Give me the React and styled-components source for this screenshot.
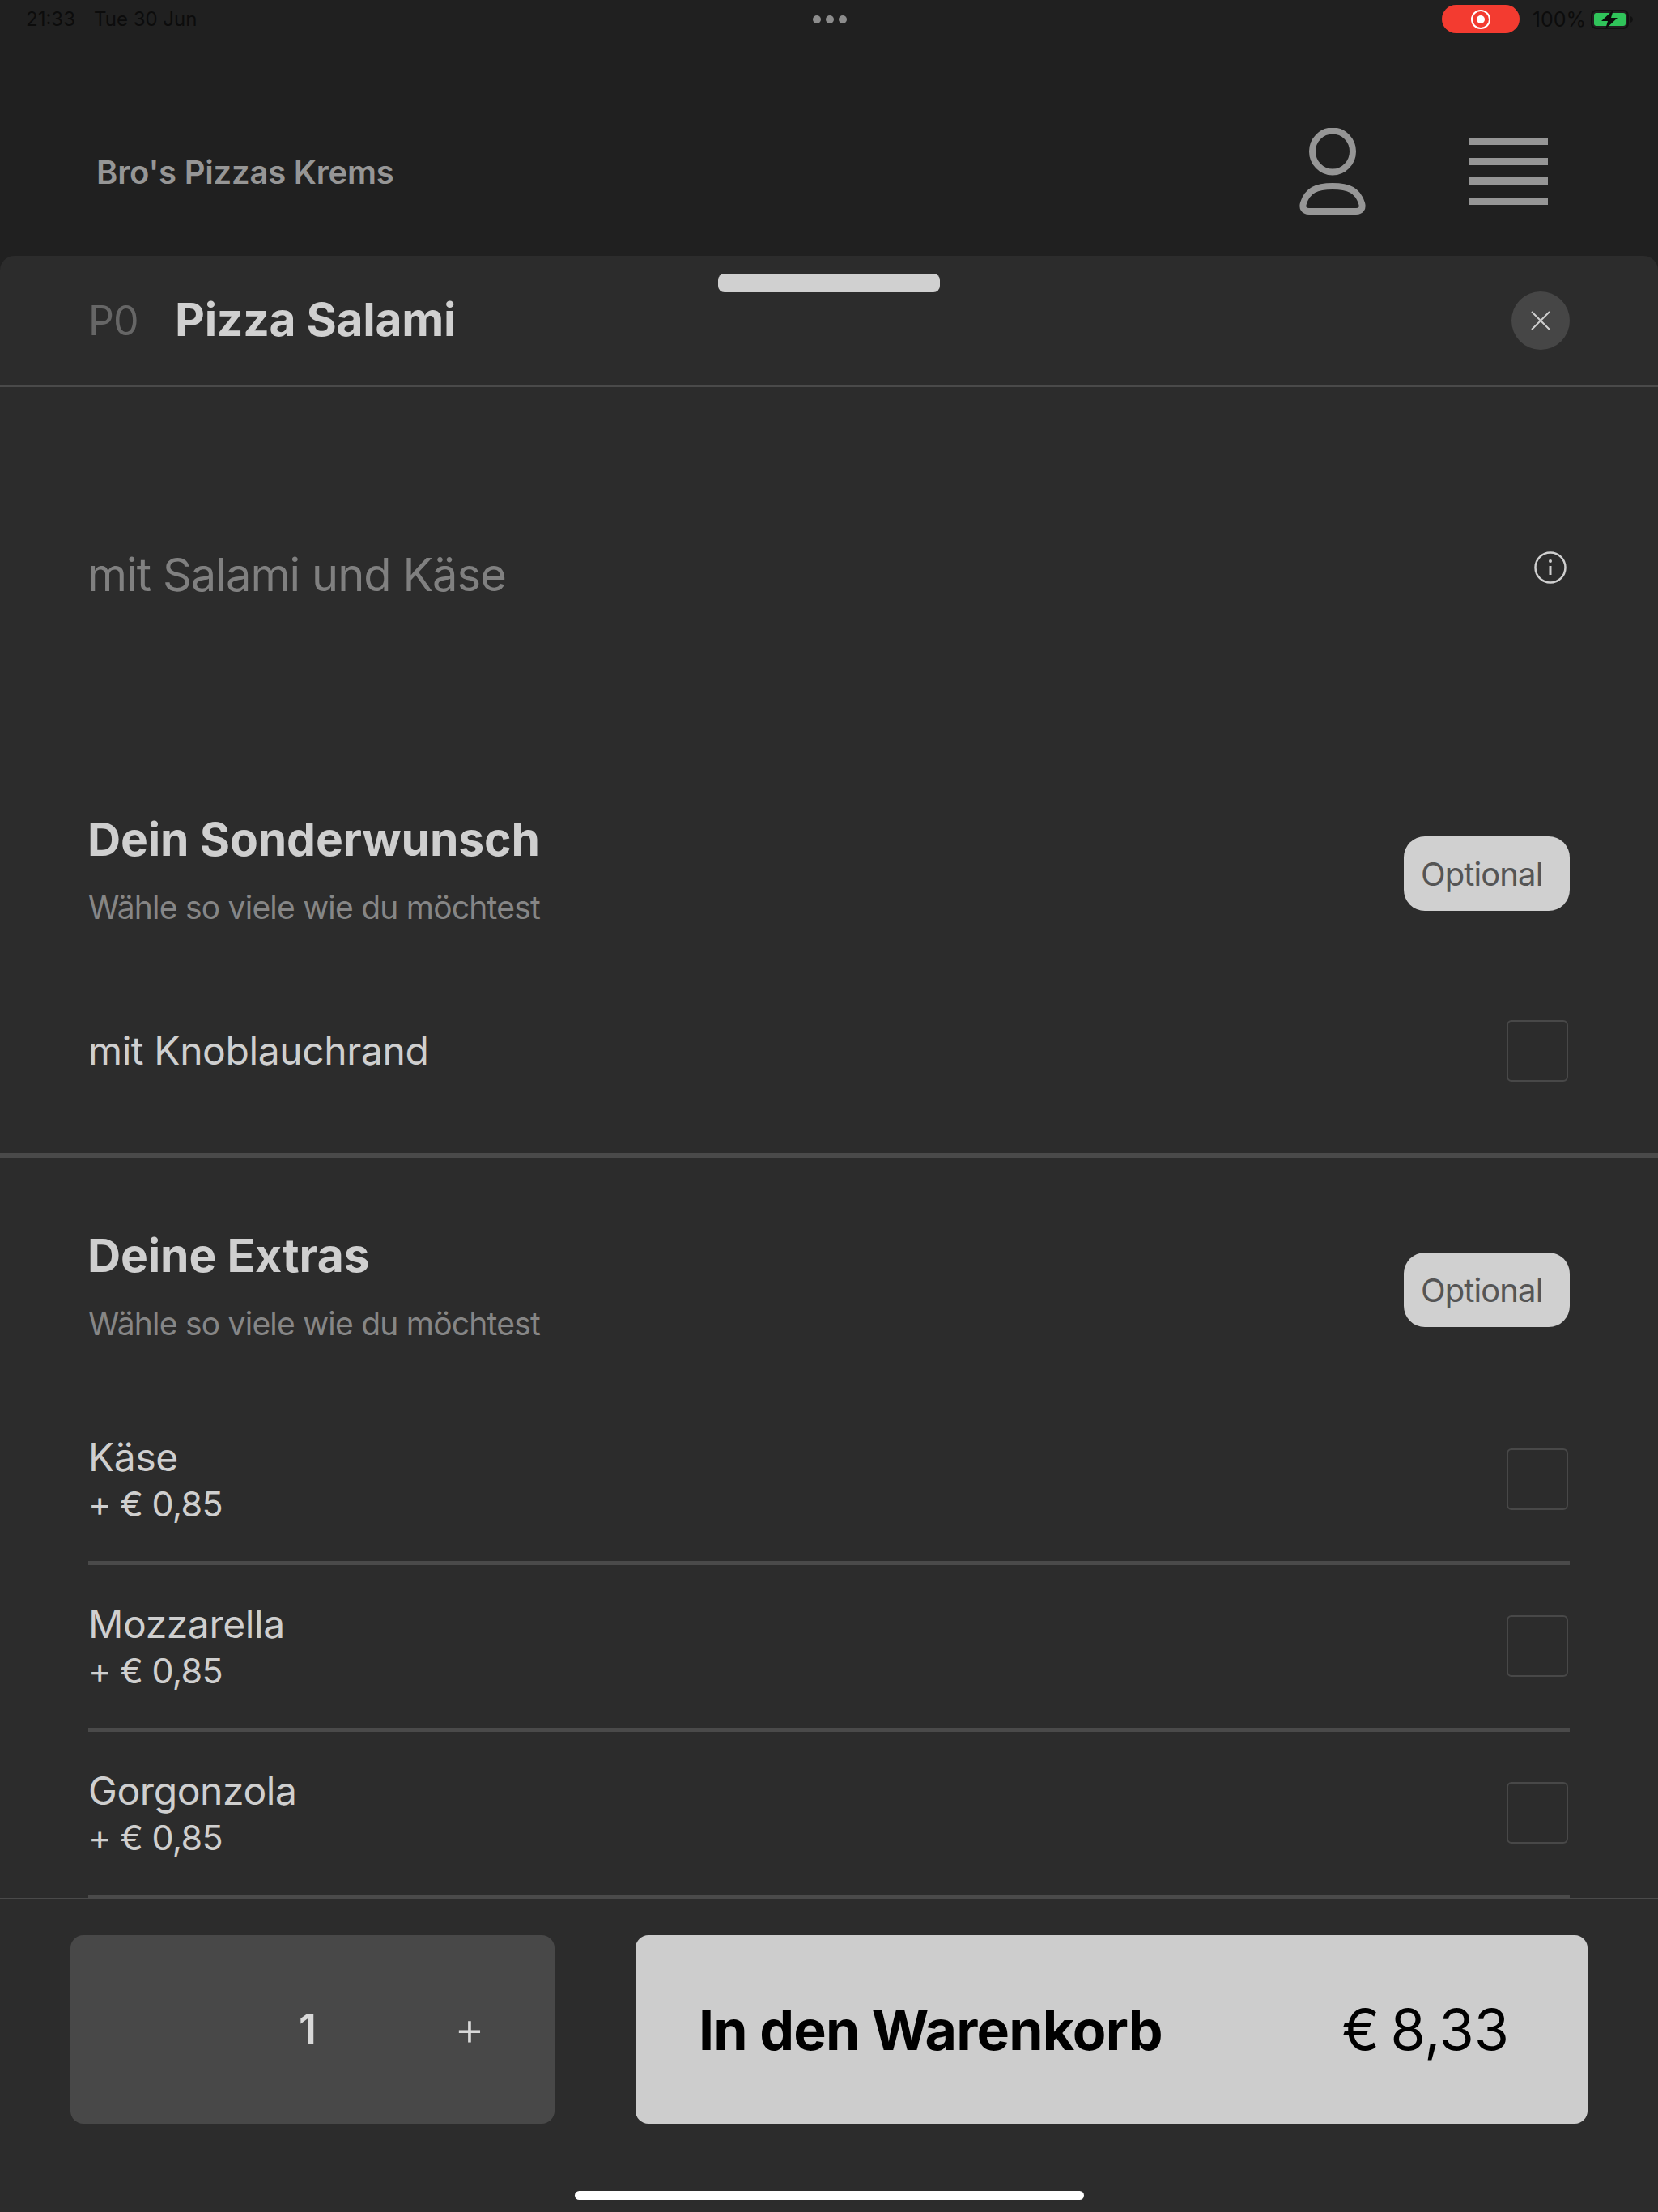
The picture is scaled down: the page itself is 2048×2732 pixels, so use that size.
import React from "react";
import styled, { createGlobalStyle } from "styled-components";

const GlobalStyle = createGlobalStyle`
  html, body {
    margin: 0;
    padding: 0;
    background: #202020;
  }
  * {
    box-sizing: border-box;
  }
`;

const Screen = styled.div`
  width: 2048px;
  height: 2732px;
  display: flex;
  flex-direction: column;
  overflow: hidden;
  background: #202020;
  font-family: Inter, "Liberation Sans", sans-serif;
`;

const StatusBar = styled.div`
  height: 47px;
  display: grid;
  grid-template-columns: 1fr auto 1fr;
  align-items: center;
  padding: 0 30px 0 32px;
  color: #0c0c0c;
  font-size: 24px;
`;

const StatusLeft = styled.div`
  display: flex;
  gap: 23px;
`;

const StatusRight = styled.div`
  display: flex;
  align-items: center;
  justify-content: flex-end;
  font-size: 25px;
`;

const Dots = styled.div`
  display: flex;
  gap: 6px;
  span {
    width: 10px;
    height: 10px;
    border-radius: 50%;
    background: #8c8c8c;
  }
`;

const RecordPill = styled.div`
  width: 96px;
  height: 35px;
  margin-right: 16px;
  border-radius: 18px;
  background: #f33b30;
  display: flex;
  align-items: center;
  justify-content: center;
`;

const RecordDot = styled.div`
  width: 24px;
  height: 24px;
  border-radius: 50%;
  border: 2px solid #fff;
  display: flex;
  align-items: center;
  justify-content: center;
  &::after {
    content: "";
    width: 10px;
    height: 10px;
    border-radius: 50%;
    background: #fff;
  }
`;

const BatteryText = styled.span`
  margin-right: 6px;
`;

const TopBar = styled.header`
  height: 269px;
  display: flex;
  align-items: flex-start;
  padding: 94px 136px 0 119px;
`;

const Brand = styled.div`
  flex: 1;
  margin-top: 48px;
  font-size: 40px;
  line-height: 48px;
  font-weight: 600;
  letter-spacing: -0.2px;
  color: #969696;
`;

const TopIcons = styled.div`
  display: flex;
  align-items: center;
  gap: 126px;
  margin-top: 17px;
`;

const Burger = styled.div`
  width: 98px;
  display: flex;
  flex-direction: column;
  gap: 15.6px;
  span {
    height: 9px;
    background: #969696;
  }
`;

const Sheet = styled.main`
  position: relative;
  flex: 1;
  min-height: 0;
  display: flex;
  flex-direction: column;
  background: #2c2c2c;
  border-radius: 18px 18px 0 0;
`;

const Grabber = styled.div`
  position: absolute;
  top: 22px;
  left: 887px;
  width: 274px;
  height: 23px;
  border-radius: 8px;
  background: #d0d0d0;
`;

const SheetHeader = styled.div`
  height: 162px;
  flex: none;
  display: flex;
  align-items: center;
  padding: 0 109px;
  border-bottom: 2px solid #4a4a4a;
`;

const Code = styled.span`
  width: 107px;
  font-size: 50px;
  letter-spacing: -1px;
  color: #666;
`;

const Title = styled.h1`
  flex: 1;
  margin: 0 0 4px;
  font-size: 57px;
  font-weight: 700;
  letter-spacing: -0.3px;
  color: #d0d0d0;
`;

const CloseButton = styled.button`
  width: 72px;
  height: 72px;
  padding: 0;
  border: 0;
  border-radius: 50%;
  background: #464646;
  display: flex;
  align-items: center;
  justify-content: center;
`;

const Scroll = styled.div`
  flex: 1;
  min-height: 0;
  overflow: hidden;
`;

const Description = styled.div`
  height: 438px;
  padding: 26px 109px 0 108px;
  display: flex;
  align-items: center;
  justify-content: space-between;
  font-size: 56px;
  letter-spacing: -0.95px;
  color: #808080;
`;

const InfoIcon = styled.svg`
  width: 40px;
  height: 40px;
  margin: 0 4px 18px 0;
`;

const Section = styled.section`
  padding: 91px 109px ${(p) => p.$bottom || 0}px;
  border-bottom: ${(p) => (p.$divided ? "6px solid #4a4a4a" : "0")};
`;

const SectionHead = styled.div`
  display: flex;
  align-items: center;
  justify-content: space-between;
  margin-bottom: 62px;
`;

const SectionTitle = styled.h2`
  margin: 0 0 24px -1px;
  font-size: 57px;
  line-height: 60px;
  font-weight: 700;
  letter-spacing: -0.15px;
  color: #cfcfcf;
`;

const SectionHint = styled.div`
  font-size: 39px;
  line-height: 60px;
  letter-spacing: -0.77px;
  color: #868686;
`;

const Badge = styled.div`
  width: 205px;
  height: 92px;
  padding-left: 21px;
  border-radius: 26px;
  background: #d0d0d0;
  color: #555;
  font-size: 40px;
  letter-spacing: -0.9px;
  display: flex;
  align-items: center;
`;

const OptionRow = styled.div`
  height: ${(p) => (p.$single ? 170 : 206)}px;
  display: flex;
  align-items: center;
  justify-content: space-between;
  border-bottom: ${(p) => (p.$single ? "0" : "5px solid #4a4a4a")};
`;

const OptionText = styled.div`
  margin-top: 2px;
`;

const OptionName = styled.div`
  font-size: 48px;
  line-height: 58px;
  letter-spacing: -0.4px;
  color: #cfcfcf;
`;

const OptionPrice = styled.div`
  margin-top: -1px;
  font-size: 43px;
  line-height: 58px;
  letter-spacing: -0.7px;
  color: #cfcfcf;
`;

const CheckBox = styled.div`
  width: 76px;
  height: 76px;
  margin: ${(p) => (p.$single ? "0 2px 0 0" : "0 2px 2px 0")};
  border: 2px solid #484848;
  border-radius: 6px;
`;

const Footer = styled.footer`
  flex: none;
  height: 388px;
  padding-top: 44px;
  border-top: 2px solid #4a4a4a;
  background: #2c2c2c;
  display: flex;
  flex-direction: column;
`;

const Actions = styled.div`
  display: flex;
  gap: 100px;
  padding: 0 87px;
`;

const Quantity = styled.div`
  width: 598px;
  height: 233px;
  border-radius: 16px;
  background: #484848;
  color: #d8d8d8;
  display: grid;
  grid-template-columns: 193px 200px 200px;
  align-items: center;
  justify-items: center;
`;

const Count = styled.span`
  grid-column: 2;
  font-size: 52px;
  font-weight: 600;
`;

const Plus = styled.span`
  margin-bottom: 4px;
  font-size: 58px;
  font-weight: 300;
  line-height: 60px;
`;

const CartButton = styled.button`
  width: 1176px;
  height: 233px;
  padding: 0 97px 0 78px;
  border: 0;
  border-radius: 16px;
  background: #cdcdcd;
  color: #000;
  font-family: inherit;
  display: flex;
  align-items: center;
  justify-content: space-between;
`;

const CartLabel = styled.span`
  font-size: 68px;
  font-weight: 700;
  letter-spacing: -0.8px;
`;

const CartPrice = styled.span`
  font-size: 70px;
  font-weight: 400;
  word-spacing: -6px;
`;

const HomeBar = styled.div`
  width: 629px;
  height: 11px;
  margin: 83px auto 0;
  border-radius: 6px;
  background: #fff;
`;

const extras = ["Käse", "Mozzarella", "Gorgonzola"];

const App = () => {
  return (
    <Screen>
      <GlobalStyle />
      <StatusBar>
        <StatusLeft>
          <span>21:33</span>
          <span>Tue 30 Jun</span>
        </StatusLeft>
        <Dots>
          <span />
          <span />
          <span />
        </Dots>
        <StatusRight>
          <RecordPill>
            <RecordDot />
          </RecordPill>
          <BatteryText>100%</BatteryText>
          <svg width="53" height="24" viewBox="0 0 53 24">
            <rect x="1" y="1" width="45" height="22" rx="6" fill="none" stroke="#111" strokeWidth="2" />
            <rect x="4" y="4" width="39" height="16" rx="3" fill="#30c45a" />
            <path d="M49 8c2 1 3 2.500 3 4s-1 3-3 4z" fill="#111" />
            <path d="M28 0 L13 14 H21 L18 24 L33 10 H25 Z" fill="#0c0c0c" />
          </svg>
        </StatusRight>
      </StatusBar>

      <TopBar>
        <Brand>Bro's Pizzas Krems</Brand>
        <TopIcons>
          <svg width="84" height="107" viewBox="0 0 84 107" fill="none" stroke="#969696" strokeWidth="8">
            <ellipse cx="42" cy="29" rx="25" ry="25.500" />
            <path d="M42 72c-20 0-31 5-36 21-2 6 1 10 7 10h58c6 0 9-4 7-10-5-16-16-21-36-21z" />
          </svg>
          <Burger>
            <span />
            <span />
            <span />
            <span />
          </Burger>
        </TopIcons>
      </TopBar>

      <Sheet>
        <Grabber />
        <SheetHeader>
          <Code>P0</Code>
          <Title>Pizza Salami</Title>
          <CloseButton aria-label="Schließen">
            <svg width="24" height="24" viewBox="0 0 24 24" stroke="#cfcfcf" strokeWidth="2">
              <path d="M1 1 23 23M23 1 1 23" />
            </svg>
          </CloseButton>
        </SheetHeader>

        <Scroll>
          <Description>
            <span>mit Salami und Käse</span>
            <InfoIcon viewBox="0 0 40 40" fill="none" stroke="#cfcfcf" strokeWidth="2.500">
              <circle cx="20" cy="20" r="18.500" />
              <path d="M20 18v11" strokeWidth="3" />
              <circle cx="20" cy="12" r="2" fill="#cfcfcf" stroke="none" />
            </InfoIcon>
          </Description>

          <Section $divided $bottom={41}>
            <SectionHead>
              <div>
                <SectionTitle>Dein Sonderwunsch</SectionTitle>
                <SectionHint>Wähle so viele wie du möchtest</SectionHint>
              </div>
              <Badge>Optional</Badge>
            </SectionHead>
            <OptionRow $single>
              <OptionName>mit Knoblauchrand</OptionName>
              <CheckBox $single />
            </OptionRow>
          </Section>

          <Section>
            <SectionHead>
              <div>
                <SectionTitle>Deine Extras</SectionTitle>
                <SectionHint>Wähle so viele wie du möchtest</SectionHint>
              </div>
              <Badge>Optional</Badge>
            </SectionHead>
            {extras.map((name) => (
              <OptionRow key={name}>
                <OptionText>
                  <OptionName>{name}</OptionName>
                  <OptionPrice>+ € 0,85</OptionPrice>
                </OptionText>
                <CheckBox />
              </OptionRow>
            ))}
          </Section>
        </Scroll>

        <Footer>
          <Actions>
            <Quantity>
              <Count>1</Count>
              <Plus>+</Plus>
            </Quantity>
            <CartButton>
              <CartLabel>In den Warenkorb</CartLabel>
              <CartPrice>€ 8,33</CartPrice>
            </CartButton>
          </Actions>
          <HomeBar />
        </Footer>
      </Sheet>
    </Screen>
  );
};

export default App;
